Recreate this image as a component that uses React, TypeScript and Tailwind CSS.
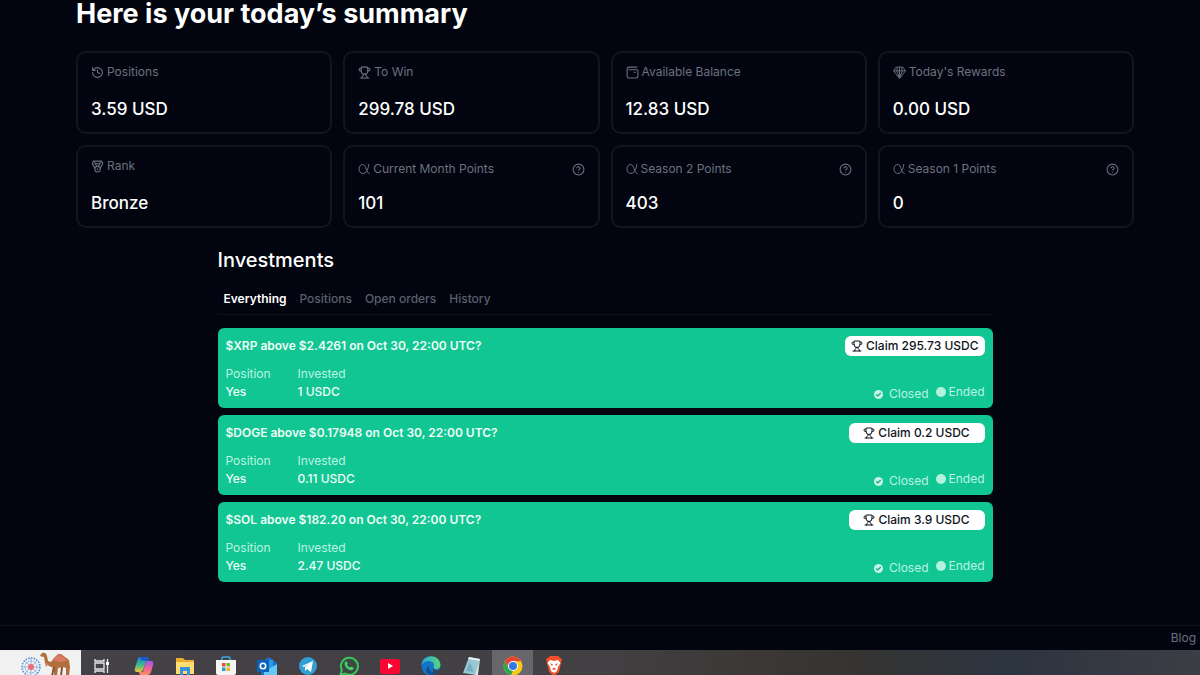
import type { ReactNode } from "react";
import { History, Trophy, Medal, CircleHelp } from "lucide-react";

function AlphaIcon() {
  return (
    <svg viewBox="0 0 24 24" className="size-3" fill="none" stroke="currentColor" strokeWidth="2" strokeLinecap="round">
      <path d="M21.500 3c-1 9-5 18-12 18C5 21 2 17 2 12s3-9 7.500-9C17 3 15 20 22.500 21" />
    </svg>
  );
}

function WalletIcon() {
  return (
    <svg viewBox="0 0 24 24" className="size-[13px]" fill="none" stroke="currentColor" strokeWidth="2" strokeLinecap="round">
      <path d="M20 2H5a3 3 0 0 0-3 3v14a3 3 0 0 0 3 3h14a3 3 0 0 0 3-3V9a2 2 0 0 0-2-2H5" />
      <path d="M15 11.500h2.500" />
    </svg>
  );
}

function GemIcon() {
  return (
    <svg viewBox="0 0 24 24" className="size-[13px]" fill="none" stroke="currentColor" strokeWidth="1.800" strokeLinejoin="round">
      <path d="M6 2h12l5 7-11 14L1 9Z" />
      <path d="M1 9h22M7.500 2.500v8L12 22l4.500-11.500v-8M12 2v20" />
    </svg>
  );
}

type Stat = { label: string; value: string; icon: ReactNode; help?: boolean };

const stats: Stat[] = [
  { label: "Positions", value: "3.59 USD", icon: <History className="size-[13px]" /> },
  { label: "To Win", value: "299.78 USD", icon: <Trophy className="size-[13px]" /> },
  { label: "Available Balance", value: "12.83 USD", icon: <WalletIcon /> },
  { label: "Today's Rewards", value: "0.00 USD", icon: <GemIcon /> },
  { label: "Rank", value: "Bronze", icon: <Medal className="size-[13px]" /> },
  { label: "Current Month Points", value: "101", icon: <AlphaIcon />, help: true },
  { label: "Season 2 Points", value: "403", icon: <AlphaIcon />, help: true },
  { label: "Season 1 Points", value: "0", icon: <AlphaIcon />, help: true },
];

function StatCard({ label, value, icon, help }: Stat) {
  return (
    <article className="flex h-[83px] flex-col justify-between rounded-[10px] border-2 border-[#10151f] px-[13px] py-[11px]">
      <div className={help ? "flex h-[22px] items-center justify-between text-[#6b7180]" : "flex h-4 items-center text-[#6b7180]"}>
        <h2 className="flex items-center gap-[3px] text-[12px] leading-4">
          {icon}
          {label}
        </h2>
        {help && (
          <button type="button" aria-label={`About ${label}`}>
            <CircleHelp className="size-[13px]" />
          </button>
        )}
      </div>
      <p className="text-[17px] leading-6 font-medium text-white">{value}</p>
    </article>
  );
}

const bets = [
  { title: "$XRP above $2.4261 on Oct 30, 22:00 UTC?", invested: "1 USDC", claim: "Claim 295.73 USDC" },
  { title: "$DOGE above $0.17948 on Oct 30, 22:00 UTC?", invested: "0.11 USDC", claim: "Claim 0.2 USDC" },
  { title: "$SOL above $182.20 on Oct 30, 22:00 UTC?", invested: "2.47 USDC", claim: "Claim 3.9 USDC" },
];

function BetCard({ title, invested, claim }: (typeof bets)[number]) {
  return (
    <li className="flex h-20 justify-between rounded-md bg-[#11c693] px-2 pt-2 pb-[6px] text-[12px]">
      <div>
        <h3 className="leading-5 font-semibold text-[#effcf7]">{title}</h3>
        <dl className="mt-[9px] flex leading-[18px]">
          <div className="w-[72px]">
            <dt className="text-[#bdf3e3]">Position</dt>
            <dd className="font-medium text-[#effcf7]">Yes</dd>
          </div>
          <div>
            <dt className="text-[#bdf3e3]">Invested</dt>
            <dd className="font-medium text-[#effcf7]">{invested}</dd>
          </div>
        </dl>
      </div>
      <div className="flex flex-col items-end justify-between">
        <button type="button" className="flex h-5 min-w-[136px] items-center justify-center gap-[3px] rounded-md bg-white px-[6px] font-medium text-[#10131a]">
          <Trophy className="size-3" />
          {claim}
        </button>
        <div className="flex items-start leading-4 text-[#bdf3e3]">
          <span className="mt-[2px] flex items-center gap-[6px]">
            <svg viewBox="0 0 24 24" className="size-[9px]">
              <circle cx="12" cy="12" r="12" fill="#c3f4e5" />
              <path d="m6 12 4 4 8-8" fill="none" stroke="#11a67c" strokeWidth="3" />
            </svg>
            Closed
          </span>
          <span className="ml-[7px] flex items-center gap-[3px]">
            <span className="size-[10px] rounded-full bg-[#b4f0de]" />
            Ended
          </span>
        </div>
      </div>
    </li>
  );
}

const tabs = ["Everything", "Positions", "Open orders", "History"];

function CamelWidget() {
  return (
    <svg viewBox="0 0 81 25" className="h-[25px] w-[81px]" aria-hidden="true">
      <g fill="none" stroke="#4f95e0">
        <circle cx="31" cy="17" r="9" strokeWidth="1.600" strokeDasharray="1.600 1.200" />
        <circle cx="31" cy="17" r="6" stroke="#86a8df" strokeWidth="1" strokeDasharray="2 1" />
        <path d="M31 8v18M22 17h18M25 11l12 12M37 11 25 23" strokeWidth=".8" stroke="#8da3dc" />
      </g>
      <circle cx="31" cy="17" r="3" fill="#ec6b7c" />
      <path d="M40 5 43 2.500 46 3.500 47 6 48 11 51 12 54 8 58 4 61 4 65 7 69 10 70 17 69 26H66L66 18 63 17 58 18 57 26H54L54 18 49 16 45 13 44 7 41 6.500Z" fill="#b06f3c" />
      <path d="M63 17 62 26h-2l1-9ZM55 17l-2 9h-2l2-9Z" fill="#8a5229" />
      <path d="m53 10 6-6 6 4 2 3-7 1Z" fill="#dd7867" />
      <path d="m45 13 4 1-3 3Z" fill="#e27768" />
    </svg>
  );
}

function TaskIcon({ label, active, children }: { label: string; active?: boolean; children: ReactNode }) {
  return (
    <button type="button" aria-label={label} className={active ? "h-full w-[41px] bg-[#67666a] pt-[6px]" : "h-full w-[41px] pt-[6px]"}>
      <svg viewBox="0 0 20 20" className="mx-auto size-5">
        {children}
      </svg>
    </button>
  );
}

function Taskbar() {
  return (
    <nav
      aria-label="Taskbar"
      className="flex h-[25px] shrink-0 overflow-hidden bg-[linear-gradient(to_right,#444147_0%,#434044_50%,#3a3735_64%,#353433_72%,#2c3440_84%,#3d3d45_100%)]"
    >
      <div className="w-[81px] shrink-0 bg-[#f1f1f2]">
        <CamelWidget />
      </div>
      <TaskIcon label="Task view">
        <g fill="none" stroke="#e8e8e8" strokeWidth="1.300">
          <path d="M3 3v2h9V3M3 17v-2h9v2M3 7h9v6H3Z" />
          <path d="M15.500 3v14" />
        </g>
        <path d="M14 6h3v3h-3z" fill="#fff" />
      </TaskIcon>
      <div className="ml-px flex">
        <TaskIcon label="Copilot">
          <defs>
            <linearGradient id="cpA" x1="0" y1="0" x2="0" y2="1">
              <stop stopColor="#1780e0" />
              <stop offset=".5" stopColor="#39b98f" />
              <stop offset="1" stopColor="#f0c53a" />
            </linearGradient>
            <linearGradient id="cpB" x1="0" y1="0" x2="0" y2="1">
              <stop stopColor="#9a5be8" />
              <stop offset=".5" stopColor="#ee5da0" />
              <stop offset="1" stopColor="#fb9360" />
            </linearGradient>
          </defs>
          <path d="M13 5h4q3 0 2 4l-2 7q-1 3-4 3H7q-2 0-2-3h4l2-8q.500-3 2-3Z" fill="url(#cpB)" />
          <path d="M6 1h7q2 0 2 4h-2q-1.500 0-2 3l-1.500 5q-1 3-3.500 3H3q-3 0-2-4L3.500 4Q4 1 6 1Z" fill="url(#cpA)" />
          <path d="M6 1h7q2 0 2 4h-2L7 4Z" fill="#1c56c8" />
        </TaskIcon>
        <TaskIcon label="File Explorer">
          <path d="M1 2h7l2 2h9v14H1Z" fill="#e9ae2d" />
          <path d="M1 6h18v12H1Z" fill="#ffdc70" />
          <path d="M5 11h10v8h-3v-4H8v4H5Z" fill="#3a92dc" />
        </TaskIcon>
        <TaskIcon label="Microsoft Store">
          <path d="M6 5V2q0-1 1-1h6q1 0 1 1v3" fill="none" stroke="#3ba4dd" strokeWidth="1.500" />
          <path d="M0 4h20v13q0 2-2 2H2q-2 0-2-2Z" fill="#f5f5f5" />
          <path d="M6 7h3.500v3.500H6Z" fill="#e65036" />
          <path d="M10.500 7H14v3.500h-3.500Z" fill="#78b52b" />
          <path d="M6 11.500h3.500V15H6Z" fill="#239bd7" />
          <path d="M10.500 11.500H14V15h-3.500Z" fill="#f3b51b" />
        </TaskIcon>
        <TaskIcon label="Outlook">
          <path d="m4 6 8-5 8 6v13H4Z" fill="#1c6fc6" />
          <path d="M9 4h7v9H9Z" fill="#2b9be6" />
          <path d="m20 8-13 8v4h13Z" fill="#65c9f5" />
          <path d="M0 4h12v12H0Z" fill="#0b62b8" />
          <circle cx="6" cy="10" r="2.700" fill="none" stroke="#fff" strokeWidth="1.600" />
        </TaskIcon>
        <TaskIcon label="Telegram">
          <circle cx="10" cy="10" r="9" fill="#319fd5" />
          <path d="m4 10 11-5-2 11-4-3-2 2v-4l5-4-6 4Z" fill="#fff" />
        </TaskIcon>
        <TaskIcon label="WhatsApp">
          <path d="m1.500 19 1.300-5A8.500 8.500 0 1 1 6 17.500Z" fill="#3b4a43" stroke="#39c75c" strokeWidth="2" />
          <path d="M7 5 5.500 7c0 4 4 8 8 7l1.500-2-3-1.500-1 1q-2-.500-3-3l1-1Z" fill="#43d466" />
        </TaskIcon>
        <TaskIcon label="YouTube">
          <rect y="3" width="20" height="15" rx="2.500" fill="#fa0632" />
          <path d="m8 7 5 3-5 3Z" fill="#fff" />
        </TaskIcon>
        <TaskIcon label="Edge">
          <defs>
            <linearGradient id="edge">
              <stop stopColor="#2da6e8" />
              <stop offset="1" stopColor="#57d773" />
            </linearGradient>
          </defs>
          <circle cx="10" cy="10" r="9.500" fill="#1475c6" />
          <path d="M.500 9C2-3 19-2 19.500 9c0 5-7 5-7 2 3-6-8-9-12-2Z" fill="url(#edge)" />
          <path d="M12 11c0 3 4 5 7 2v7h-7Z" fill="#434044" />
          <path d="M8 10c-1 5 4 8 9 5-3 5-11 5-12 0q0-4 3-5Z" fill="#104e96" />
        </TaskIcon>
        <TaskIcon label="Notepad">
          <path d="m7 1 11 2-4 16-13-2Z" fill="#99c8d4" />
          <path d="m7 1 11 2-.500 2L6 3Z" fill="#e8eff0" />
          <path d="m18 3-2 16h-3Z" fill="#dce3e3" />
          <path d="m8 6-4 9 8 1Z" fill="#75afc2" />
        </TaskIcon>
        <TaskIcon label="Chrome" active>
          <circle cx="10" cy="10" r="9.500" fill="#f8c81d" />
          <path d="M1.800 5.200A9.500 9.500 0 0 1 18.200 5.200H10L6 12Z" fill="#e84335" />
          <path d="M1.800 5.200 6 12.400l4 2.300-2 4.600A9.500 9.500 0 0 1 1.800 5.200Z" fill="#32a653" />
          <circle cx="10" cy="10" r="5" fill="#fff" />
          <circle cx="10" cy="10" r="4" fill="#3478e5" />
        </TaskIcon>
        <TaskIcon label="Brave">
          <path d="M6 0 4 2 2 3l1 4 2 9 5 4 5-4 2-9 1-4-2-1-2-2Z" fill="#f4502a" />
          <path d="m6 4 4 1 4-1 2.500 3L14 11l-1 4-3 2-3-2-1-4-2.500-4Z" fill="#fff" />
          <path d="m6 7 3 1.500L8 10Zm8 0-3 1.500 1 1.500Zm-6 6 2-1.500 2 1.500-2 1Z" fill="#f4502a" />
        </TaskIcon>
      </div>
    </nav>
  );
}

export default function App() {
  return (
    <div className="flex min-h-screen flex-col bg-[#02050f] font-['Inter',sans-serif] text-white">
      <main className="pr-[66px] pl-[76px]">
        <h1 className="text-[27px] leading-7 font-bold">Here is your today’s summary</h1>
        <section aria-label="Summary" className="mt-[23px] grid grid-cols-4 gap-[11px]">
          {stats.map((s) => (
            <StatCard key={s.label} {...s} />
          ))}
        </section>
        <section className="mx-auto mt-[18px] max-w-[775px]">
          <h2 className="text-[20px] leading-7 font-medium">Investments</h2>
          <div role="tablist" className="mt-[10px] flex h-[31px] items-center gap-[13px] border-b border-[#0d121c] px-[6px] text-[12px]">
            {tabs.map((t, i) => (
              <button key={t} type="button" role="tab" aria-selected={i === 0} className={i === 0 ? "font-semibold text-white" : "font-medium text-[#5a606d]"}>
                {t}
              </button>
            ))}
          </div>
          <ul className="mt-[13px] flex flex-col gap-[7px]">
            {bets.map((b) => (
              <BetCard key={b.title} {...b} />
            ))}
          </ul>
        </section>
      </main>
      <footer className="mt-auto flex h-[25px] items-center justify-end border-t border-[#0d121c] px-1 text-[12px] text-[#6b7180]">
        <a href="#blog">Blog</a>
      </footer>
      <Taskbar />
    </div>
  );
}
